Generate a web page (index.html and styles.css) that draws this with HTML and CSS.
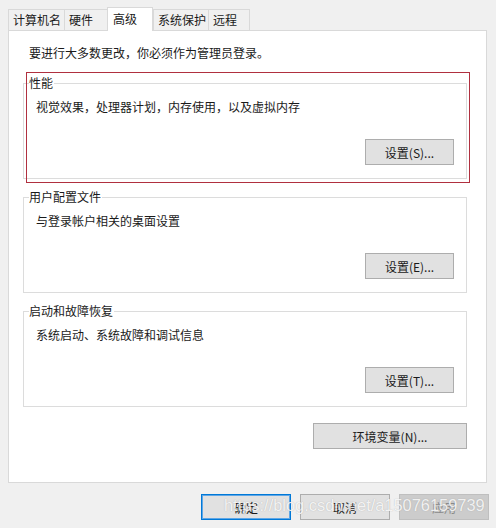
FILE: index.html
```html
<!DOCTYPE html>
<html lang="zh-CN">
<head>
<meta charset="utf-8">
<title>系统属性 - 高级</title>
<link rel="stylesheet" href="styles.css">
</head>
<body>
<div class="tabs">
  <div class="tab t1">计算机名</div>
  <div class="tab t2">硬件</div>
  <div class="tab t3 active">高级</div>
  <div class="tab t4">系统保护</div>
  <div class="tab t5">远程</div>
</div>
<div class="panel">
  <div class="notice">要进行大多数更改，你必须作为管理员登录。</div>
  <fieldset class="group">
    <legend>性能</legend>
    <div class="gb-body">
      <div class="desc">视觉效果，处理器计划，内存使用，以及虚拟内存</div>
      <div class="btn-row"><button class="btn set">设置(S)...</button></div>
    </div>
  </fieldset>
  <fieldset class="group next">
    <legend>用户配置文件</legend>
    <div class="gb-body">
      <div class="desc">与登录帐户相关的桌面设置</div>
      <div class="btn-row"><button class="btn set">设置(E)...</button></div>
    </div>
  </fieldset>
  <fieldset class="group next">
    <legend>启动和故障恢复</legend>
    <div class="gb-body">
      <div class="desc">系统启动、系统故障和调试信息</div>
      <div class="btn-row"><button class="btn set">设置(T)...</button></div>
    </div>
  </fieldset>
  <div class="env-row"><button class="btn env">环境变量(N)...</button></div>
</div>
<div class="footer">
  <button class="btn dlg default">确定</button>
  <button class="btn dlg">取消</button>
  <button class="btn dlg disabled">应用</button>
</div>
<div class="highlight"></div>
<div class="watermark">https://blog.csdn.net/a15076159739</div>
</body>
</html>
```
FILE: styles.css
```css
html, body {
  margin: 0;
  padding: 0;
}
body {
  width: 496px;
  height: 528px;
  overflow: hidden;
  background: #f0f0f0;
  font-family: "Noto Sans CJK SC", "Noto Sans", sans-serif;
  font-size: 12px;
  color: #1a1a1a;
}
.tabs {
  display: flex;
  align-items: flex-end;
  height: 30px;
  padding-left: 8px;
  box-sizing: border-box;
}
.tab {
  height: 21px;
  line-height: 20px;
  box-sizing: border-box;
  padding-left: 4px;
  border: 1px solid #d9d9d9;
  border-bottom: none;
  border-right: none;
  background: #f0f0f0;
  white-space: nowrap;
}
.t1 { width: 56px; }
.t2 { width: 43px; }
.t3 { width: 46px; }
.t4 { width: 55px; }
.t5 { width: 42px; border-right: 1px solid #d9d9d9; }
.tab.active {
  height: 24px;
  line-height: 22px;
  padding-left: 5px;
  background: #fff;
  margin-bottom: -1px;
  position: relative;
  z-index: 2;
  border-right: 1px solid #d9d9d9;
}
.panel {
  margin-left: 8px;
  width: 479px;
  height: 453px;
  box-sizing: border-box;
  background: #fff;
  border: 1px solid #d9d9d9;
  padding: 14px 19px 0 14px;
  position: relative;
  z-index: 1;
}
.notice {
  line-height: 16px;
  margin-left: 6px;
}
.group {
  margin: 14px 0 0 0;
  padding: 0 0 13px 0;
  border: 1px solid #dcdcdc;
  min-width: 0;
}
.group.next {
  margin-top: 10px;
}
.group legend {
  margin-left: 5px;
  padding: 0 1px 0 0;
  line-height: 16px;
}
.gb-body {
  padding: 8px 12px 0 12px;
}
.desc {
  line-height: 16px;
}
.btn-row {
  display: flex;
  justify-content: flex-end;
  margin-top: 24px;
}
.btn {
  font-family: "Noto Sans CJK SC", "Noto Sans", sans-serif;
  font-size: 12px;
  color: #1a1a1a;
  height: 26px;
  background: #e1e1e1;
  border: 1px solid #adadad;
  padding: 0;
  margin: 0;
  box-sizing: border-box;
}
.btn.set {
  width: 89px;
}
.env-row {
  display: flex;
  justify-content: flex-end;
  margin-top: 16px;
}
.btn.env {
  width: 154px;
}
.footer {
  display: flex;
  justify-content: flex-end;
  gap: 9px;
  margin-top: 11px;
  padding-right: 7px;
}
.btn.dlg {
  width: 90px;
}
.btn.default {
  border: 1px solid #0078d7;
  box-shadow: inset 0 0 0 1px #5ea6e6;
}
.btn.disabled {
  background: #cccccc;
  border-color: #bfbfbf;
  color: #8a8a8a;
}
.highlight {
  position: absolute;
  left: 26px;
  top: 72px;
  width: 444px;
  height: 111px;
  box-sizing: border-box;
  border: 1px solid #b0303f;
  z-index: 3;
  pointer-events: none;
}
.watermark {
  position: absolute;
  left: 224px;
  top: 495px;
  font-family: "Liberation Sans", Arial, sans-serif;
  font-size: 16.4px;
  line-height: 20px;
  color: rgba(255, 255, 255, 0.85);
  text-shadow: 0 0 1px rgba(120, 120, 120, 0.5);
  z-index: 4;
  white-space: nowrap;
}
```
